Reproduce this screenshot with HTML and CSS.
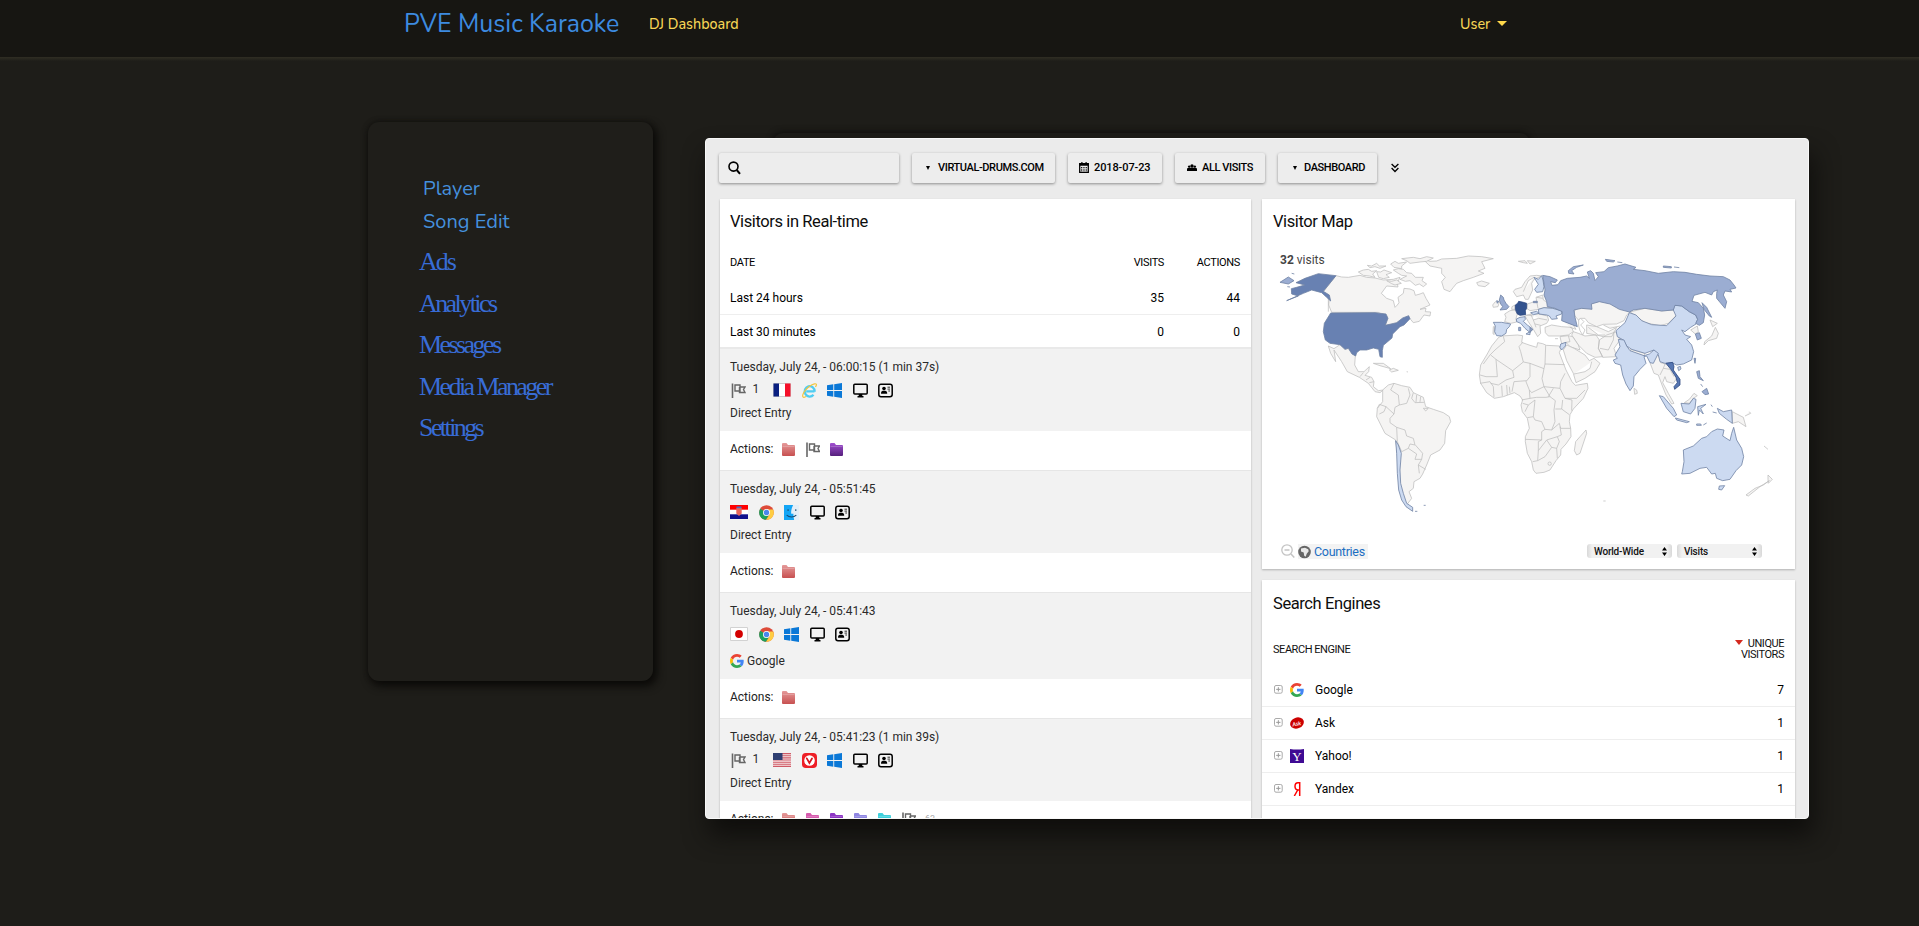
FILE: index.html
```html
<!DOCTYPE html>
<html lang="en">
<head>
<meta charset="utf-8">
<title>PVE Music Karaoke</title>
<link rel="stylesheet" href="styles.css">
</head>
<body>
<svg class="defs" width="0" height="0">
<defs>
<linearGradient id="gRed" x1="0" y1="0" x2="0" y2="1"><stop offset="0" stop-color="#e59a9a"/><stop offset="1" stop-color="#c75050"/></linearGradient>
<linearGradient id="gPurple" x1="0" y1="0" x2="0" y2="1"><stop offset="0" stop-color="#a24fd2"/><stop offset="1" stop-color="#55207c"/></linearGradient>
<symbol id="flagAction" viewBox="0 0 14 15"><path d="M1 .5V15" stroke="#666" stroke-width="1.6"/><path d="M3.500 2H8.500V8H3.500ZM8.500 4H13.500L12 6.500L13.500 9.500H8V4" fill="none" stroke="#666" stroke-width="1.4"/></symbol>
<symbol id="fr" viewBox="0 0 18 14"><path fill="#fff" stroke="#ccc" d="M.5.5h17v13H.5z"/><path fill="#0a1f80" d="M.5.5h5.500v13H.5z"/><path fill="#f5102a" d="M12 .5h5.500v13H12z"/></symbol>
<symbol id="hr" viewBox="0 0 18 14"><path fill="#fff" d="M0 0h18v14H0z"/><path fill="#f00" d="M0 0h18v4.700H0z"/><path fill="#10108c" d="M0 9.300h18V14H0z"/><path fill="#e8655c" d="M6.300 3h5.400v5.500L9 11 6.300 8.500z"/><path fill="#4a6cc0" d="M6.500 1.500h5v1.700h-5z"/></symbol>
<symbol id="jp" viewBox="0 0 18 14"><path fill="#fff" stroke="#d2d2d2" d="M.5.5h17v13H.5z"/><circle cx="9" cy="7" r="3.900" fill="#d40000"/></symbol>
<symbol id="us" viewBox="0 0 18 14"><path fill="#f7e9ea" d="M0 0h18v14H0z"/><path stroke="#cf5a66" stroke-width="1.100" d="M0 .6h18M0 2.700h18M0 4.900h18M0 7h18M0 9.200h18M0 11.300h18M0 13.400h18"/><path fill="#2f3f72" d="M0 0h9.500v7H0z"/></symbol>
<symbol id="ie" viewBox="0 0 15 15"><path d="M12.500 8.300H4.200M12.700 8.600A5 5.200 0 1 0 11.500 11.800" fill="none" stroke="#4fcdf2" stroke-width="2.300"/><path d="M4 13.600C1 15.500 -.5 13.500 1.800 9.500S9.500 1.200 12.500 .8s1.800 1.800 1 3.200" fill="none" stroke="#f4c53c" stroke-width="1.200"/></symbol>
<symbol id="win" viewBox="0 0 15 15"><path fill="#0a78d7" d="M0 2.200L6.300 1.300V7H0zM7.200 1.200L15 0V7H7.200zM0 8H6.300V13.700L0 12.800zM7.200 8H15V15L7.200 13.800z"/></symbol>
<symbol id="chrome" viewBox="0 0 15 15"><circle cx="7.500" cy="7.500" r="7.300" fill="#dd4b39"/><path fill="#1aa15f" d="M7.500 7.500L1.200 3.700A7.300 7.300 0 0 0 7 14.800L10 10z"/><path fill="#ffcd42" d="M7 14.800A7.300 7.300 0 0 0 14.200 4.500H7.500L11 9z"/><circle cx="7.500" cy="7.500" r="3.500" fill="#fff"/><circle cx="7.500" cy="7.500" r="2.700" fill="#4a87ee"/></symbol>
<symbol id="finder" viewBox="0 0 14 14"><path fill="#e4eef7" d="M0 0h14v14H0z"/><path fill="#13a5f5" d="M0 0h8.500C6.500 4 6.500 7 6.800 8.200h2C8.700 10 9 12 9.500 14H0z"/><path d="M2.500 9.500c2.500 2.200 6.500 2.200 9 0M3.800 4v1.500M11 4v1.500" fill="none" stroke="#17486f"/></symbol>
<symbol id="monitor" viewBox="0 0 15 14"><rect x=".8" y=".8" width="13.400" height="9.600" rx="1" fill="none" stroke="#000" stroke-width="1.500"/><path d="M5.700 10.500h3.600v2h1.200V14h-6v-1.500h1.200z"/></symbol>
<symbol id="card" viewBox="0 0 15 14"><rect x=".8" y=".8" width="13.400" height="12.400" rx="2.200" fill="none" stroke="#000" stroke-width="1.500"/><circle cx="6" cy="5" r="1.800"/><path d="M3 10.300c0-3 1.300-3 3-3s3.200 0 3.200 3z"/><path d="M9.500 3.700h2.500M9.500 5.600h2.500M10.300 7.500h1.700" stroke="#000" stroke-width=".8"/></symbol>
<symbol id="vivaldi" viewBox="0 0 15 15"><rect width="15" height="15" rx="3.800" fill="#ee1f27"/><circle cx="7.500" cy="7.500" r="5.300" fill="#fff"/><path d="M4.800 5.300L7.400 10L10 5.500" fill="none" stroke="#d8151c" stroke-width="1.700" stroke-linecap="round"/></symbol>
<symbol id="google" viewBox="0 0 48 48"><path fill="#EA4335" d="M24 9.500c3.540 0 6.710 1.220 9.210 3.600l6.850-6.850C35.900 2.380 30.470 0 24 0 14.620 0 6.510 5.380 2.560 13.220l7.980 6.190C12.430 13.720 17.740 9.500 24 9.500z"/><path fill="#4285F4" d="M46.980 24.550c0-1.570-.15-3.090-.38-4.550H24v9.020h12.940c-.58 2.960-2.260 5.480-4.780 7.180l7.730 6c4.510-4.180 7.090-10.360 7.090-17.650z"/><path fill="#FBBC05" d="M10.530 28.590c-.48-1.450-.76-2.990-.76-4.590s.27-3.140.76-4.590l-7.980-6.190C.92 16.460 0 20.120 0 24c0 3.880.92 7.540 2.560 10.780l7.970-6.190z"/><path fill="#34A853" d="M24 48c6.480 0 11.930-2.130 15.890-5.810l-7.730-6c-2.150 1.450-4.920 2.300-8.160 2.300-6.260 0-11.570-4.220-13.470-9.910l-7.980 6.190C6.510 42.620 14.620 48 24 48z"/></symbol>
<symbol id="folder" viewBox="0 0 13 13"><path d="M0 1Q0 0 1 0H4.500L6 2H12Q13 2 13 3V12Q13 13 12 13H1Q0 13 0 12Z"/><path d="M.5 3.500H12.500" stroke="#fff" stroke-opacity=".2"/></symbol>
<symbol id="plus" viewBox="0 0 9 9"><rect x=".5" y=".5" width="7.700" height="7.700" rx="1.500" fill="#fff" stroke="#aaa"/><path d="M2.200 4.350h4.300M4.350 2.200v4.300" stroke="#999"/></symbol>
</defs>
</svg>

<header class="nav">
  <span class="brand">PVE Music Karaoke</span>
  <span class="nav-link">DJ Dashboard</span>
  <span class="nav-user">User</span><i class="caret"></i>
</header>

<main class="content">
  <aside class="sidebar">
    <a class="side-link">Player</a>
    <a class="side-link">Song Edit</a>
    <a class="side-serif first">Ads</a>
    <a class="side-serif">Analytics</a>
    <a class="side-serif">Messages</a>
    <a class="side-serif">Media Manager</a>
    <a class="side-serif">Settings</a>
  </aside>

  <div class="stage">
  <section class="panel">
    <div class="toolbar">
      <div class="btn search"><svg width="13" height="14" viewBox="0 0 13 14"><circle cx="5.500" cy="5.600" r="4.500" fill="none" stroke="#000" stroke-width="1.600"/><path d="M8.700 9L12 12.800" stroke="#000" stroke-width="2"/></svg></div>
      <div class="btn b-site"><i class="tri"></i><span>VIRTUAL-DRUMS.COM</span></div>
      <div class="btn b-date"><svg width="10" height="11" viewBox="0 0 10 11"><path d="M.7 1.700h8.600v8.600H.7z" fill="none" stroke="#000" stroke-width="1.300"/><path d="M.5 1.300h9v2.400h-9zM2.300 0h1.200v2H2.300zM6.500 0h1.200v2H6.500z"/><path d="M2 5.500h6M2 7.200h6M2 8.800h6" stroke="#000" stroke-dasharray="1 .7" stroke-width=".9"/></svg><span>2018-07-23</span></div>
      <div class="btn b-visits"><svg width="10" height="8" viewBox="0 0 10 8"><circle cx="5" cy="2" r="1.700"/><circle cx="2.200" cy="2.600" r="1.200"/><circle cx="7.800" cy="2.600" r="1.200"/><path d="M0 7V5q0-1.300 2-1.300h6q2 0 2 1.300v2z"/></svg><span>ALL VISITS</span></div>
      <div class="btn b-dash"><i class="tri"></i><span>DASHBOARD</span></div>
      <svg class="more" width="8" height="10" viewBox="0 0 8 10"><path d="M.6 1L4 4.300L7.400 1M.6 5L4 8.500L7.400 5" fill="none" stroke="#000" stroke-width="1.300"/></svg>
    </div>
    <div class="cols">
      <div class="widget live">
        <h2>Visitors in Real-time</h2>
        <div class="grid head"><span>DATE</span><span class="num">VISITS</span><span class="num">ACTIONS</span></div>
        <div class="grid line"><span>Last 24 hours</span><span class="num">35</span><span class="num">44</span></div>
        <div class="grid last"><span>Last 30 minutes</span><span class="num">0</span><span class="num">0</span></div>

        <div class="visit">
          <p>Tuesday, July 24, - 06:00:15 (1 min 37s)</p>
          <div class="icons"><svg class="fl"><use href="#flagAction"/></svg><b>1</b><svg class="country"><use href="#fr"/></svg><svg><use href="#ie"/></svg><svg><use href="#win"/></svg><svg><use href="#monitor"/></svg><svg><use href="#card"/></svg></div>
          <p>Direct Entry</p>
        </div>
        <div class="actions"><span>Actions:</span><svg class="fo red"><use href="#folder"/></svg><svg class="fl"><use href="#flagAction"/></svg><svg class="fo purple"><use href="#folder"/></svg></div>

        <div class="visit">
          <p>Tuesday, July 24, - 05:51:45</p>
          <div class="icons"><svg class="country"><use href="#hr"/></svg><svg><use href="#chrome"/></svg><svg><use href="#finder"/></svg><svg><use href="#monitor"/></svg><svg><use href="#card"/></svg></div>
          <p>Direct Entry</p>
        </div>
        <div class="actions"><span>Actions:</span><svg class="fo red"><use href="#folder"/></svg></div>

        <div class="visit tall">
          <p>Tuesday, July 24, - 05:41:43</p>
          <div class="icons"><svg class="country"><use href="#jp"/></svg><svg><use href="#chrome"/></svg><svg><use href="#win"/></svg><svg><use href="#monitor"/></svg><svg><use href="#card"/></svg></div>
          <p class="ref"><svg><use href="#google"/></svg><span>Google</span></p>
        </div>
        <div class="actions"><span>Actions:</span><svg class="fo red"><use href="#folder"/></svg></div>

        <div class="visit">
          <p>Tuesday, July 24, - 05:41:23 (1 min 39s)</p>
          <div class="icons"><svg class="fl"><use href="#flagAction"/></svg><b>1</b><svg class="country"><use href="#us"/></svg><svg><use href="#vivaldi"/></svg><svg><use href="#win"/></svg><svg><use href="#monitor"/></svg><svg><use href="#card"/></svg></div>
          <p>Direct Entry</p>
        </div>
        <div class="actions"><span>Actions:</span><svg class="fo red"><use href="#folder"/></svg><svg class="fo pink"><use href="#folder"/></svg><svg class="fo violet"><use href="#folder"/></svg><svg class="fo lilac"><use href="#folder"/></svg><svg class="fo teal"><use href="#folder"/></svg><svg class="fl"><use href="#flagAction"/></svg><em>63</em></div>
      </div>

      <div class="right">
        <div class="widget map">
          <h2>Visitor Map</h2>
          <div class="mapbox">
            <div class="count"><b>32</b> visits</div>
            <svg class="world" width="533" height="290" viewBox="1262 245 533 290">
              <g class="land" transform="translate(1260 190) scale(.33333)">
                <path d="M228 257L245 261L265 262L300 256L320 262L345 264L370 270L400 268L420 262L412 280L414 291L380 288L364 310L380 325L400 332L405 352L412 345L417 338L414 322L430 310L432 295L450 297L462 302L466 316L480 312L490 308L498 325L510 345L480 358L498 355L496 365L512 366L510 378L492 375L478 394L460 398L450 386L440 382L400 404L375 406L382 385L355 367L215 367L206 345L208 320L190 305Z"/>
                <path d="M487 206L510 214L530 213L545 207L590 205L625 198L665 200L700 206L665 215L675 235L655 243L672 250L640 262L610 272L590 280L580 292L570 305L552 298L545 275L556 262L545 250L545 235L510 228Z"/>
                <path d="M650 278L665 273L688 280L675 290L655 287Z"/>
                <path d="M295 246L310 240L325 238L335 244L350 242L338 252L345 262L328 258L310 256Z M350 245L362 246L372 240L395 248L378 254L388 262L370 266L356 262Z M322 226L335 228L350 220L358 228L378 228L360 235L345 230L330 233Z M392 222L405 214L415 220L440 216L425 228L425 236L402 232Z M425 206L460 202L480 206L500 200L520 204L500 214L480 216L450 220L440 212Z M400 240L415 236L430 238L440 248L455 250L466 262L490 262L486 272L500 282L490 290L478 282L466 286L450 272L436 274L420 268L440 258L425 256L415 250Z M380 272L395 274L410 270L424 280L405 285L395 281Z"/>
                <path d="M205 468L222 476L240 464L255 478L265 475L286 498L284 525L295 545L312 545L328 530L326 545L315 556L335 562L342 575L340 590L355 602L370 600L360 608L345 605L325 580L298 562L262 545L245 515L222 480L227 515L212 490Z M300 560L310 548M318 570L330 562M328 578L342 575M340 520L370 520L392 536L360 527Z M388 540L400 535L415 541L395 546Z M440 545l4 1"/>
                <path d="M368 600L385 585L402 580L425 587L450 592L460 608L490 622L497 650L520 658L550 668L568 680L572 695L557 722L554 760L540 780L512 795L500 825L488 852L480 865L462 875L460 895L447 905L455 925L440 945L425 920L418 880L415 820L407 750L375 730L350 680L352 655L368 635Z"/>
                <path class="ln" d="M402 580L392 600L415 615L418 645L440 640L450 615L445 595M460 608L455 625L465 638L492 637M470 615L468 636M482 620L480 636M418 645L405 652L402 672L390 685L390 698L410 712L435 720L440 738L460 745L465 765L450 762L445 775L470 792L465 808L485 808L488 790L466 765M485 808L475 825L497 838M475 825L478 850M352 655L358 643L378 650L372 665L358 672M378 650L402 672M410 712L412 755L425 785L445 775M490 655h15l-8 8zM205 315L205 365"/>
              </g>
              <g class="land" transform="translate(1470 240) scale(.33333)">
                <path d="M86 292L95 288L142 285L158 287L155 307L177 315L200 322L203 308L218 311L229 316L268 318L272 328L268 338L288 390L306 425L316 436L352 430L354 445L340 475L310 507L300 524L298 545L302 565L303 590L288 612L273 628L272 645L258 662L240 690L222 697L198 700L190 690L185 665L172 640L166 605L166 590L178 565L172 535L157 515L153 495L158 480L150 468L133 458L100 470L73 475L50 458L32 430L28 405L32 375L50 345L65 318Z"/>
                <path class="ln" d="M100 289L104 305L75 330L60 345L40 372M62 345L78 358L82 410L48 410L30 405M78 358L128 392L160 366L152 335L147 320L158 307M160 366L180 370L222 386L225 372L227 316M225 372L284 374M222 386L216 416L222 440M180 370L180 410L168 425L178 450M128 392L132 412L108 420L85 435L62 430M132 425L170 422M132 425L126 455M222 440L185 458L178 450L180 475L155 480M222 440L270 445L272 425L285 400M270 445L285 475L320 475L345 450M285 475L306 480L305 512M278 480L275 507L298 524M180 475L200 472L228 472L240 470L256 482L252 510L255 545L245 570L225 568L215 545L195 540L190 530L172 533M166 598L215 600L215 575L225 568M215 600L205 605L205 632L203 662L188 665M205 632L230 600L245 622L225 650L203 662M230 600L262 590L268 605L260 625L245 622M245 570L268 550L272 565L302 565M262 590L274 585L270 560M260 625L262 655M70 440L72 472M95 437L97 468M110 435L112 465M118 440L120 460M30 430L60 425L70 440M256 507L275 507M158 490L175 495L165 515M175 495L195 480L190 530M250 445L235 470M222 440L240 470"/>
                <circle cx="239" cy="671" r="5"/>
                <path d="M348 570L350 580L330 640L320 645L313 632L317 605L330 590Z"/>
                <path d="M130 155L135 148L155 142L165 125L180 108L200 106L215 108L192 118L185 130L188 150L175 178L166 178L160 165L140 170Z M192 112L175 122L160 155"/>
                <path d="M145 64L165 62L172 70L160 68Z M172 62L196 64L180 72Z M68 195L76 185L88 186L84 200L70 202Z"/>
                <path d="M104 222L120 212L135 210L142 222L138 235L140 246L122 250L104 245L108 232Z M126 200L135 195L136 208L125 208Z M70 260L74 260L72 284L69 280Z"/>
                <path d="M172 192L200 183L198 172L218 165L220 180L236 190L240 203L222 203L205 208L180 212L170 205Z M200 183L204 205M200 172L218 175"/>
                <path d="M165 228L182 222L207 222L232 228L236 240L230 250L210 258L212 280L203 290L190 268L175 245Z M182 222L190 240L206 235M190 240L198 262M206 235L232 240M195 252L212 256M170 225L190 228"/>
                <path d="M225 262L245 255L275 260L305 262L310 275L295 285L268 288L235 288L226 278Z M275 240L310 255L318 268L300 262M255 296h9"/>
                <path d="M318 205L360 205L362 190L395 182L440 190L470 208L482 214L470 225L462 242L440 252L400 253L380 260L355 248L345 235L332 235L325 240L310 222Z"/>
                <path d="M310 275L325 280L345 288L378 285L388 300L385 325L398 350L375 352L350 340L325 315L305 285Z M350 255L380 260L415 275L440 262L425 290L400 290L378 285L350 280Z M355 262L385 285L405 285M388 300L410 285L440 275L450 300L432 325L440 350L398 352L385 325Z M432 275L430 300L415 330L390 325M400 255L420 265L450 258"/>
                <path class="sea" d="M326 240L332 235L342 245L332 255L345 270L338 285L330 272L326 258Z"/>
                <path d="M270 290L295 287L308 290L325 315L330 330L300 320L288 307L275 312Z M295 287L300 305L288 307"/>
                <path d="M280 330L290 315L312 325L345 345L358 362L372 355L390 370L375 395L345 415L318 428L310 400L290 362Z M312 402L345 395L360 385L365 365"/>
              </g>
              <g class="land" transform="translate(1530 230) scale(.33333)">
                <path d="M300 246L345 235L395 243L430 240L440 255L415 280L390 287L345 278L318 258Z M302 358L345 370L342 378L300 364Z M312 475l8 5l2 10l-8 3z"/>
                <path d="M360 398L385 372L392 398L405 402L425 410L440 445L430 460L410 455L405 440L398 458L415 490L432 520L425 522L408 495L396 465L385 435L372 430Z M390 435L400 415L420 418L432 440M405 402L400 415"/>
                <path d="M482 300L502 288L505 305L496 312Z M540 270L562 280L548 290Z M556 292L565 310L560 325L535 332L522 345L524 335L545 318Z M463 518L478 508L492 490L502 497L490 505L478 520Z M607 545L640 562L648 590L625 575L607 580Z M645 558L662 550L658 545M648 795L675 775L700 765L718 752L690 770L655 798Z M714 735L727 748L715 760L714 748Z M702 648l12 10M220 813h7"/>
              </g>
              <g class="c1" transform="translate(1470 240) scale(.33333)">
                <path d="M192 112L205 118L215 107L219 120L222 140L218 155L200 157L194 148L205 133Z"/>
                <path d="M70 247L95 247L122 252L118 260L110 268L108 280L95 288L80 287L74 275L76 258Z"/>
                <path d="M139 237L150 232L165 230L166 238L160 244L172 255L188 267L186 272L180 272L180 284L168 282L178 276L165 265L152 250L140 245Z"/>
                <path d="M205 208L222 203L248 205L275 213L275 222L258 228L262 236L245 238L238 228L230 225L207 222Z M182 218L200 214L207 220L190 224Z M272 312L288 307L286 318L275 330L270 322Z"/>
              </g>
              <g class="c2" transform="translate(1470 240) scale(.33333)"><path d="M92 165L100 172L102 180L108 190L117 200L110 208L90 210L98 200L92 192L88 180Z M80 182L86 184L82 190Z M190 184h12v4h-12z M146 262h6v10h-6z"/></g>
              <path class="c4" transform="translate(1470 240) scale(.33333)" d="M136 195L143 190L146 184L160 187L170 190L170 205L166 212L167 224L150 226L142 222L136 208Z"/>
              <g class="c1" transform="translate(1530 230) scale(.33333)">
                <path d="M258 302L285 278L298 248L318 255L335 272L365 284L410 287L438 258L430 240L433 225L455 228L478 245L497 255L503 268L498 282L482 292L465 305L455 300L465 315L482 320L470 328L485 345L491 365L485 390L460 402L440 405L425 398L405 400L390 395L385 375L372 360L345 370L305 358L290 348L280 330L262 320Z M443 412l8 -3l2 8l-7 5z"/>
                <path d="M265 328L282 330L290 348L300 362L342 377L358 372L372 360L385 370L370 400L360 398L350 378L342 380L348 400L330 418L312 440L310 468L300 482L288 462L278 435L272 405L255 400L250 390L262 385L255 375L270 350Z"/>
                <path d="M388 497L400 500L430 535L440 555L432 560L410 535Z M436 564L478 575L470 578L440 570Z M453 520L478 522L490 505L498 508L495 535L482 552L460 545Z M503 530L528 523L512 535L520 552L508 540L505 556Z M500 582h12l2 4h-14zM520 585l10 -6M543 524l4 6M548 546l12 3M562 535L580 545L605 540L607 580L590 568L568 550Z"/>
                <path d="M457 725L462 695L460 660L490 648L515 625L530 620L545 605L562 597L582 600L578 618L600 632L605 610L611 592L620 630L635 655L641 680L635 705L618 722L600 748L578 752L560 745L556 730L545 732L530 712L510 715L480 730L455 732Z M568 768L584 767L575 780L566 778Z"/>
              </g>
              <g class="c2" transform="translate(1530 230) scale(.33333)">
                <path d="M38 136L60 140L82 150L76 158L62 155L66 166L84 164L92 152L112 145L150 142L170 138L178 145L172 126L182 122L190 130L195 152L205 140L197 128L222 125L235 113L262 108L285 102L318 112L310 118L345 122L385 130L430 125L465 127L500 133L540 138L580 140L600 150L612 165L618 174L600 178L605 186L585 183L580 195L590 215L585 235L560 205L560 190L562 180L550 185L545 195L525 187L492 196L486 214L505 218L520 235L524 255L520 278L508 286L497 280L503 268L497 255L478 245L455 228L435 226L430 240L395 243L345 235L310 240L298 246L268 238L240 222L208 215L184 222L186 238L155 235L132 240L135 262L142 290L95 272L97 245L75 235L52 230L50 215L42 195L45 180L42 160Z"/>
                <path d="M115 122L130 110L160 105L140 112L125 122L132 132L116 130Z M226 88L255 92L250 96L230 94Z M262 96l15 2M400 108l24 2v4l-24 -2zM432 111l16 2M516 218L530 232L545 262L538 258L522 238Z"/>
                <path d="M496 312L508 308L514 325L502 330Z M492 385h5l-2 15z M500 425L508 422L510 440L520 452L505 445Z M512 462l6 8M516 485L530 475L536 492L525 494Z M0 292l6 6l-6 10z"/>
              </g>
              <path class="c4 viet" transform="translate(1530 230) scale(.33333)" d="M408 400L428 397L432 410L430 420L450 448L450 465L434 478L432 470L442 458L438 442L424 420Z"/>
              <path class="c2" transform="translate(1260 190) scale(.33333)" d="M60 277L85 261L102 272L85 282Z M95 250l8 2M82 290l8 1"/>
              <g class="c3" transform="translate(1260 190) scale(.33333)">
                <path d="M228 257L190 304L208 315L212 333L200 322L185 308L155 300L130 310L80 332L115 318L95 312L94 296L110 292L134 285L108 278L135 265L175 251Z"/>
                <path d="M212 369L345 368L378 372L384 385L376 406L410 398L428 384L446 377L450 386L432 405L420 410L398 432L396 444L370 466L367 482L367 502L360 500L356 478L340 474L320 480L300 480L290 488L287 498L276 492L265 475L255 478L240 464L210 460L196 450L190 425L193 400Z"/>
              </g>
              <path class="c1" transform="translate(1260 190) scale(.33333)" d="M407 752L415 765L424 790L420 840L422 880L430 910L440 940L458 952L458 964L438 950L425 930L416 900L412 850L410 790Z M465 964l7 0M491 946l6 0"/>
            </svg>
          </div>
          <div class="mapfoot">
            <svg class="zo" width="14" height="14" viewBox="0 0 14 14"><circle cx="6" cy="6" r="5.200" fill="none" stroke="#c4c4c4" stroke-width="1.300"/><path d="M3.500 6h5M10 10l3.300 3.500" stroke="#c4c4c4" stroke-width="1.500"/></svg>
            <span class="countries"><svg width="13" height="14" viewBox="0 0 13 14"><circle cx="6.500" cy="7" r="6.300" fill="#666"/><path d="M3 3.500l4-.8 3.200 1.500.5 2-2 2.500-1 3-1.500-1-.5-3.200L3 6.500z" fill="#e8e8e8"/></svg><span>Countries</span></span>
            <span class="sel">World-Wide<svg width="5" height="9" viewBox="0 0 5 9"><path d="M2.500 0L5 3.600H0zM2.500 9L5 5.400H0z"/></svg></span>
            <span class="sel">Visits<svg width="5" height="9" viewBox="0 0 5 9"><path d="M2.500 0L5 3.600H0zM2.500 9L5 5.400H0z"/></svg></span>
          </div>
        </div>

        <div class="widget engines">
          <h2>Search Engines</h2>
          <div class="ehead"><span>SEARCH ENGINE</span><span class="uv"><i class="down"></i>UNIQUE<br>VISITORS</span></div>
          <div class="erow"><svg class="plus"><use href="#plus"/></svg><svg class="logo"><use href="#google"/></svg><span>Google</span><span class="n">7</span></div>
          <div class="erow"><svg class="plus"><use href="#plus"/></svg><svg class="logo" viewBox="0 0 14 14"><ellipse cx="7" cy="7" rx="7" ry="5.400" fill="#c00" transform="rotate(-20 7 7)"/><text x="2.200" y="9.600" class="ask" transform="rotate(-10 7 7)">Ask</text></svg><span>Ask</span><span class="n">1</span></div>
          <div class="erow"><svg class="plus"><use href="#plus"/></svg><svg class="logo" viewBox="0 0 14 14"><path fill="#3f0a93" d="M0 0Q7 1 14 0V14H0z"/><text x="7" y="11.500" class="yahoo">Y</text></svg><span>Yahoo!</span><span class="n">1</span></div>
          <div class="erow"><svg class="plus"><use href="#plus"/></svg><svg class="logo" viewBox="0 0 14 14"><path d="M9.700 14V.8H8Q5 .8 5 4.300T8 8h1.700M7.700 8L4.300 14" fill="none" stroke="#f00" stroke-width="1.500"/></svg><span>Yandex</span><span class="n">1</span></div>
          <div class="erow"></div>
        </div>
      </div>
    </div>
  </section>
  </div>
</main>
</body>
</html>
```
FILE: styles.css
```css
* { box-sizing: border-box; }
body { margin: 0; height: 926px; overflow: hidden; background: #1e1d19; font-family: "Roboto", "Inter", sans-serif; color: #111; }
.defs { position: absolute; }

.nav { height: 61px; display: flex; align-items: flex-start; padding-left: 404px; background: linear-gradient(#171612 57px, #302e24 57px, #27261e 59px, #1e1d19 61px); font-family: "Nunito", "Open Sans", sans-serif; line-height: 47px; white-space: nowrap; }
.brand { width: 245px; font-size: 26px; color: #3d8be0; transform: scaleX(.96); transform-origin: left; }
.nav-link { width: 811px; font-size: 16px; line-height: 48px; font-weight: 500; color: #f6d455; transform: scaleX(.895); transform-origin: left; }
.nav-user { width: 37px; font-size: 16px; line-height: 48px; font-weight: 500; color: #f6d455; transform: scaleX(.895); transform-origin: left; }
.caret { border: 5px solid transparent; border-top-color: #ffd84a; border-bottom: 0; margin-top: 21px; }

.content { display: flex; align-items: flex-start; padding: 61px 0 0 368px; }
.sidebar { width: 285px; height: 559px; border-radius: 11px; background: #1f1e1a; box-shadow: 3px 4px 8px 1px #0b0a08, 0 0 5px #141310; padding: 50px 0 0 51px; display: flex; flex-direction: column; }
.side-link { height: 33px; padding-left: 4px; font: 20px/34px "Nunito", "Open Sans", sans-serif; color: #4590dd; }
.side-serif { height: 41.500px; font: 26px/41.500px "Liberation Serif", serif; color: #386cd6; letter-spacing: -2.580px; }
.side-serif.first { margin-top: 3px; letter-spacing: -2px; }
.stage { position: relative; margin: 16px 0 0 52px; box-shadow: 4px 16px 24px 0 #0f0e0c; border-radius: 4px; }
.stage::before { content: ""; position: absolute; left: 68px; top: -5px; width: 757px; height: 100px; border-radius: 10px; box-shadow: 0 0 7px #0c0b09; }
.panel { position: relative; width: 1104px; height: 681px; overflow: hidden; background: #ebebeb; border: 1px solid #f8f8f8; border-radius: 4px; }

.toolbar { display: flex; gap: 13px; padding: 14px 0 0 13px; height: 60px; }
.btn { height: 30px; padding-bottom: 1px; border-radius: 2px; box-shadow: 0 1px 3px rgba(0,0,0,.4); background: #ededed; font-size: 11px; font-weight: 500; letter-spacing: -.4px; color: #000; display: flex; align-items: center; white-space: nowrap; }
.search { width: 180px; padding-left: 9px; }
.b-site { width: 143px; padding-left: 14px; gap: 8px; }
.b-date { width: 94px; padding-left: 11px; gap: 5px; letter-spacing: -.1px; }
.b-visits { width: 90px; padding-left: 12px; gap: 5px; }
.b-dash { width: 99px; padding-left: 15px; gap: 7px; }
.tri { border: 2.500px solid transparent; border-top: 4px solid #000; border-bottom: 0; }
.more { margin: 10px 0 0 1px; }

.cols { display: flex; gap: 11px; padding-left: 14px; }
.widget { background: #fff; box-shadow: 0 1px 2px rgba(0,0,0,.25); }
.widget h2 { margin: 0; font-size: 16.500px; font-weight: 400; line-height: 20px; letter-spacing: -.4px; color: #0d0d0d; padding: 13px 0 0 11px; white-space: nowrap; }
.live { width: 531px; height: 640px; font-size: 12px; }
.live h2 { padding-left: 10px; }
.grid { display: grid; grid-template-columns: 1fr 100px 76px; padding: 0 11px 0 10px; color: #000; align-items: center; white-space: nowrap; }
.num { text-align: right; }
.head { height: 49px; font-size: 11px; padding-top: 11px; letter-spacing: -.35px; }
.line { height: 33px; border-bottom: 1px solid #eee; }
.head + .line { margin-top: 1px; }
.last { height: 34px; padding-top: 1px; border-bottom: 2px solid #e9e9e9; }
.visit { height: 82px; background: #f2f2f2; padding: 8px 0 0 10px; color: #2a2a2a; }
.visit.tall { height: 86px; }
.visit p { margin: 0; height: 20px; line-height: 20px; white-space: nowrap; }
.visit p.ref { margin-top: 4px; display: flex; gap: 3px; align-items: center; }
.ref svg { width: 14px; height: 14px; }
.icons { display: flex; align-items: center; height: 26px; gap: 10.500px; }
.icons svg { width: 15px; height: 15px; flex: none; }
.icons svg.country { width: 18px; height: 14px; }
.icons .fl { margin-left: 1px; }
.icons b { font-weight: 400; width: 7px; margin: -3px 3px 0 -4px; }
.actions { height: 40px; border-bottom: 1px solid #e6e6e6; padding: 0 0 4px 10px; color: #222; display: flex; align-items: center; }
.actions span { width: 41px; }
.fo { width: 13px; height: 13px; margin: 2px 0 0 11px; }
.fo.red { fill: url(#gRed); }
.fo.purple { fill: url(#gPurple); }
.fo.pink { fill: #d65cae; }
.fo.violet { fill: #8d35c4; }
.fo.lilac { fill: #8f86e2; }
.fo.teal { fill: #3fd0dc; }
.actions .fl { width: 14px; height: 15px; margin: 2px -1px 0 11px; }
.actions em { font-style: normal; font-size: 9px; color: #aaa; margin-left: 10px; }

.right { width: 533px; display: flex; flex-direction: column; gap: 11px; }
.map { height: 370px; }
.mapbox { position: relative; margin-top: 13px; height: 290px; }
.world { display: block; }
.count { position: absolute; left: 18px; top: 7px; font-size: 12px; line-height: 16px; color: #444; }
.land path, .land circle { fill: #f5f4f3; stroke: #bcbcbc; stroke-width: 2.200; }
.land .ln { fill: none; }
.land .sea { fill: #fff; }
.c1, .c2, .c3, .c4 { stroke: #6f81a3; stroke-width: 2.400; stroke-linejoin: round; }
.c1 { fill: #ccdaf1; }
.c2 { fill: #9badd2; }
.c3 { fill: #6881b2; }
.c4 { fill: #33538f; stroke: #2c4880; }
.viet { fill: #5777b3; }
.mapfoot { display: flex; align-items: center; height: 16px; margin-top: 8px; padding-left: 19px; }
.countries { display: flex; align-items: center; gap: 3px; width: 70px; height: 15px; margin: 0 219px 0 3px; background: #f3f3f3; font-size: 12.500px; letter-spacing: -.3px; color: #1b6ec2; }
.countries svg { flex: none; margin-top: 2px; }
.sel { display: flex; justify-content: space-between; align-items: center; width: 85px; height: 14px; margin-right: 5px; padding: 0 5px 0 7px; border-radius: 3px; background: linear-gradient(90deg, #d8d8d8, #f1f1f1 5px, #f1f1f1 80px, #d8d8d8); font-size: 10px; font-weight: 500; letter-spacing: -.2px; color: #111; }

.engines { height: 300px; font-size: 12px; }
.engines h2 { padding-top: 14px; }
.ehead { display: flex; justify-content: space-between; align-items: center; height: 44px; margin: 13px 0 3px; padding: 0 11px; font-size: 11px; line-height: 11px; letter-spacing: -.45px; }
.uv { text-align: right; }
.down { display: inline-block; border: 4px solid transparent; border-top: 5px solid #d4291f; border-bottom: 0; margin: 0 5px 2px 0; }
.erow { height: 33px; display: flex; align-items: center; border-bottom: 1px solid #eee; padding: 0 11px 0 12px; color: #000; }
.plus { width: 9px; height: 9px; margin: -2px 7px 0 0; }
.logo { width: 14px; height: 14px; margin-right: 11px; }
.erow .n { margin-left: auto; }
.ask { font: italic bold 5.500px "Lato", sans-serif; fill: #fff; }
.yahoo { font: 13px "Liberation Serif", serif; fill: #fff; text-anchor: middle; }
```
